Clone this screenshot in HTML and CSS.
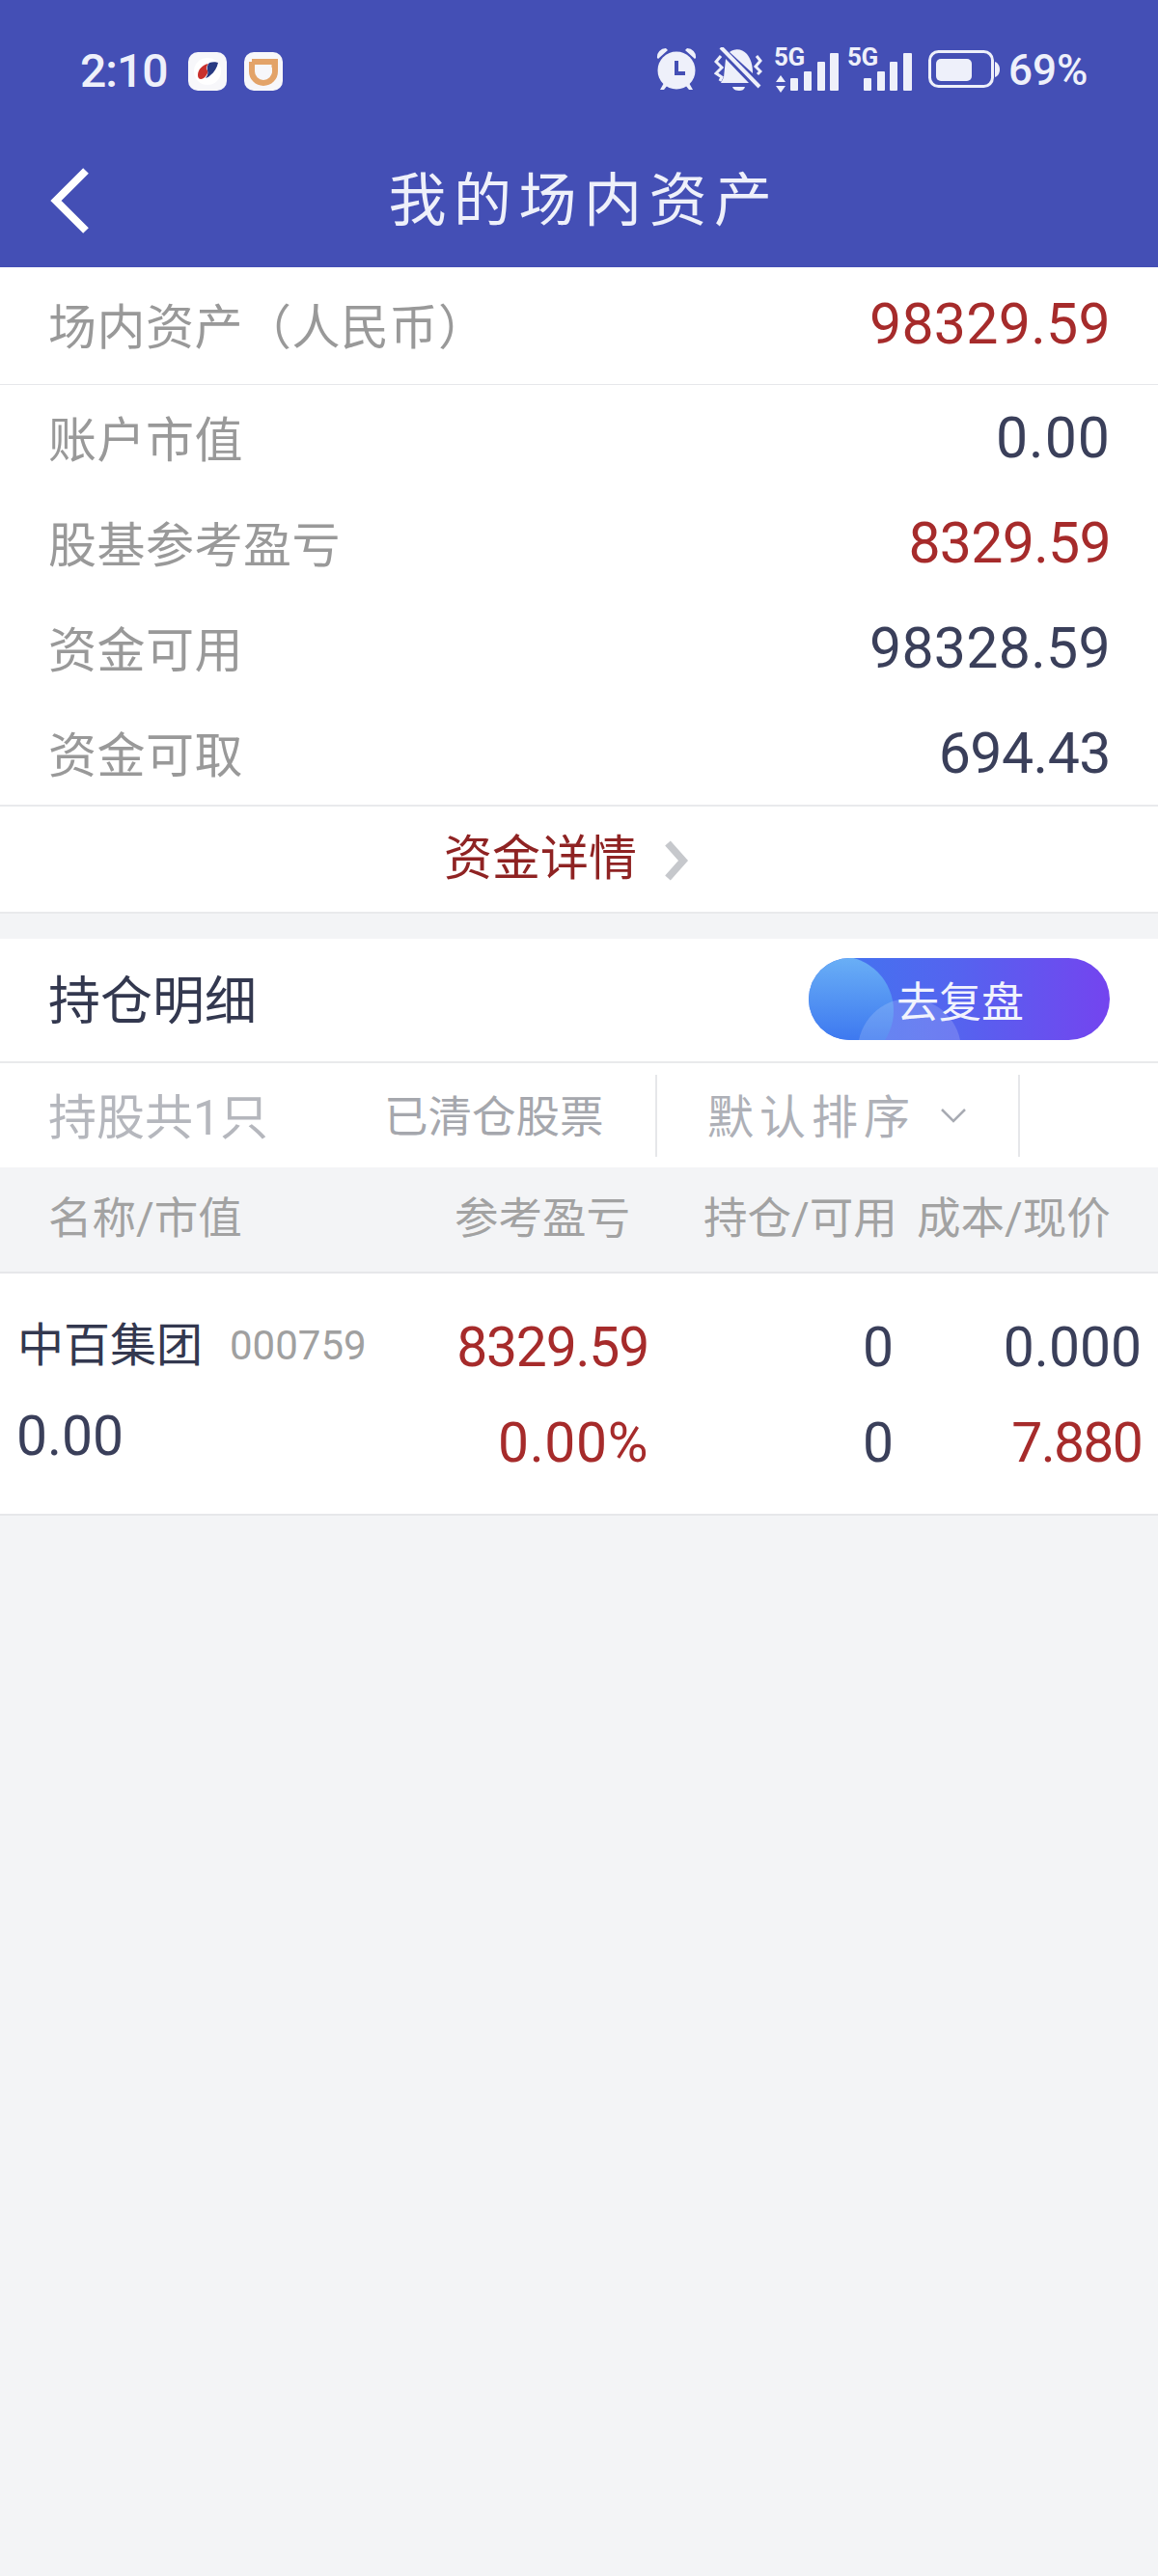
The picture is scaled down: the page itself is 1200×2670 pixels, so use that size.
FILE: index.html
```html
<!DOCTYPE html>
<html lang="zh">
<head>
<meta charset="utf-8">
<title>我的场内资产</title>
<link rel="stylesheet" href="styles.css">
</head>
<body>
<div class="page">
  <header class="header">
    <div class="status">
      <span class="time">2:10</span>
      <span class="app app-first">
        <svg width="40" height="40" viewBox="0 0 40 40"><rect width="40" height="40" rx="10" fill="#f7f7fa"/><circle cx="20" cy="20" r="14" fill="#fff"/><path d="M10 24c0-6 5-11 11-12-2 3-3 5-1 7 1 2-1 6-4 8-3 2-6 1-6-3z" fill="#c9302c"/><path d="M22 11c3-1 7-1 9 0-1 5-4 10-8 13-2 2-3 2-5 3 2-3 3-5 2-8-1-3 0-6 2-8z" fill="#283a82"/></svg>
      </span>
      <span class="app">
        <svg width="40" height="40" viewBox="0 0 40 40"><rect width="40" height="40" rx="10" fill="#f7f7fa"/><path d="M8 10h24v3h-3.500M8 10v10a12 12 0 0 0 24 0v-4" fill="none" stroke="#e3a368" stroke-width="6"/><path d="M14 14h11v4h4v3a9 9 0 0 1-15 0z" fill="#f7f7fa"/></svg>
      </span>
      <span class="status-fill"></span>
      <svg class="ic-alarm" width="42" height="46" viewBox="0 0 42 46"><circle cx="21" cy="25" r="19.500" fill="#eef0fa"/><path d="M1 12a9 9 0 0 1 9-10l2 2-10 9zM41 12a9 9 0 0 0-9-10l-2 2 10 9z" fill="#eef0fa"/><path d="M8 38l-4 7h4l4-5zM34 38l4 7h-4l-4-5z" fill="#eef0fa"/><path d="M19 15h4v11h7v4H19z" fill="#444fb5"/></svg>
      <svg class="ic-bell" width="50" height="46" viewBox="0 0 50 46"><path d="M16 5c5-4 13-4 18 2 4 5 6 11 6 20z" fill="#eef0fa"/><path d="M12 12l24 25H7l3-6z" fill="#eef0fa"/><path d="M19 41h13c-1 3-3 4-6 4s-6-1-7-4z" fill="#eef0fa"/><path d="M7 0l40 41" stroke="#eef0fa" stroke-width="4" fill="none"/><path d="M7 9L2 15l6 6-6 6 6 4-2 4M44 9l4 5-5 6 5 5-3 3" stroke="#eef0fa" stroke-width="3" fill="none"/></svg>
      <span class="signal signal-first">
        <span class="five-g">5G</span>
        <svg class="arrows" width="12" height="18" viewBox="0 0 12 18"><path d="M6 0l5 7H1zM1 11h10l-5 7z" fill="#eef0fa"/></svg>
        <svg class="bars" width="50" height="40" viewBox="0 0 50 40"><rect x="0" y="26" width="8" height="13" rx="1" fill="#eef0fa"/><rect x="14" y="19" width="8" height="20" rx="1" fill="#eef0fa"/><rect x="28" y="9" width="8" height="30" rx="1" fill="#eef0fa"/><rect x="41" y="0" width="9" height="39" rx="1" fill="#eef0fa"/></svg>
      </span>
      <span class="signal signal-second">
        <span class="five-g">5G</span>
        <svg class="bars" width="50" height="40" viewBox="0 0 50 40"><rect x="0" y="26" width="8" height="13" rx="1" fill="#eef0fa"/><rect x="14" y="19" width="8" height="20" rx="1" fill="#eef0fa"/><rect x="27" y="9" width="8" height="30" rx="1" fill="#eef0fa"/><rect x="41" y="0" width="9" height="39" rx="1" fill="#eef0fa"/></svg>
      </span>
      <svg class="ic-batt" width="74" height="40" viewBox="0 0 74 40"><rect x="1.500" y="1.500" width="65" height="36" rx="9" fill="none" stroke="#eef0fa" stroke-width="3"/><rect x="8" y="9" width="37" height="23" rx="5" fill="#eef0fa"/><path d="M69 12c3 1 5 4 5 8s-2 7-5 8z" fill="#eef0fa"/></svg>
      <span class="pct">69%</span>
    </div>
    <div class="nav">
      <svg class="back" width="42" height="70" viewBox="0 0 42 70"><path d="M37 4L6 35l31 31" fill="none" stroke="#fff" stroke-width="8"/></svg>
      <h1 class="title">我的场内资产</h1>
    </div>
  </header>

  <section class="summary">
    <div class="total">
      <span class="label">场内资产（人民币）</span>
      <span class="val red sp-total">98329.59</span>
    </div>
    <div class="stats">
      <div class="stat"><span class="label">账户市值</span><span class="val sp-wide">0.00</span></div>
      <div class="stat"><span class="label">股基参考盈亏</span><span class="val red sp-tight">8329.59</span></div>
      <div class="stat"><span class="label">资金可用</span><span class="val sp-total">98328.59</span></div>
      <div class="stat"><span class="label">资金可取</span><span class="val sp-slight">694.43</span></div>
    </div>
    <div class="detail-link">
      <span class="detail-text">资金详情</span>
      <svg class="detail-arrow" width="27" height="42" viewBox="0 0 27 42"><path d="M5 3l16 18L5 39" fill="none" stroke="#c6c8cc" stroke-width="7.500"/></svg>
    </div>
  </section>

  <section class="holdings">
    <div class="hold-head">
      <h2 class="hold-title">持仓明细</h2>
      <div class="review"><i class="bubble bubble-a"></i><i class="bubble bubble-b"></i><span class="review-text">去复盘</span></div>
    </div>
    <div class="filters">
      <span class="count">持股共1只</span>
      <span class="cleared">已清仓股票</span>
      <span class="sort"><span class="sort-text">默认排序</span><svg width="28" height="16" viewBox="0 0 28 16"><path d="M2 2l12 12L26 2" fill="none" stroke="#a8abb3" stroke-width="2.500"/></svg></span>
      <span class="filter-rest"></span>
    </div>
    <div class="thead">
      <span class="th th-name">名称/市值</span>
      <span class="th th-pl">参考盈亏</span>
      <span class="th th-pos">持仓/可用</span>
      <span class="th th-cost">成本/现价</span>
    </div>
    <div class="trow">
      <div class="cell-name">
        <div class="name-line"><span class="name">中百集团</span><span class="code">000759</span></div>
        <div class="mv">0.00</div>
      </div>
      <div class="cell cell-pl"><span class="num red num-tight">8329.59</span><span class="num red num-wide">0.00%</span></div>
      <div class="cell cell-pos"><span class="num">0</span><span class="num">0</span></div>
      <div class="cell cell-cost"><span class="num">0.000</span><span class="num red num-tighter">7.880</span></div>
    </div>
  </section>
</div>
</body>
</html>
```
FILE: styles.css
```css
* { box-sizing: border-box; }
html, body { margin: 0; padding: 0; }
body {
  background: #f3f4f6;
  font-family: Roboto, "Noto Sans CJK SC", sans-serif;
  color: #3a3f5a;
}
.page { width: 1200px; height: 2670px; background: #f3f4f6; overflow: hidden; }

/* header */
.header { height: 277px; background: #444fb5; color: #eef0fa; }
.status { height: 140px; display: flex; align-items: center; padding: 7px 73px 0 83px; }
.time { font-size: 48px; font-weight: 500; letter-spacing: -1px; width: 112px; }
.app { display: block; height: 40px; margin-right: 18px; }
.app svg, .status svg { display: block; }
.status-fill { flex: 1; }
.ic-alarm { margin-right: 18px; margin-top: -6px; }
.ic-bell { margin-right: 12px; margin-top: -4px; }
.signal { position: relative; display: block; height: 46px; margin-top: -2px; }
.signal-first { width: 67px; margin-right: 9px; }
.signal-second { width: 67px; margin-right: 17px; }
.five-g { position: absolute; left: 0; top: -3px; font-size: 26px; font-weight: 700; line-height: 24px; letter-spacing: -0.500px; }
.arrows { position: absolute; left: 1px; top: 28px; }
.bars { position: absolute; right: 0; top: 5px; }
.ic-batt { margin-right: 9px; margin-top: -4px; }
.pct { font-size: 44px; font-weight: 500; width: 82px; white-space: nowrap; margin-top: -2px; }

.nav { height: 137px; position: relative; display: flex; align-items: center; justify-content: center; }
.back { position: absolute; left: 52px; top: 33px; }
.title { margin: 0 0 0 10px; font-size: 60px; font-weight: 400; letter-spacing: 7.500px; line-height: 80px; color: #eef0fa; }

/* summary */
.summary { background: #fff; }
.total {
  height: 122px;
  padding: 0 49px 5px 50px;
  display: flex; justify-content: space-between; align-items: center;
  border-bottom: 1px solid #e6e7ea;
}
.stats { height: 437px; border-bottom: 2px solid #e9eaec; }
.stat { height: 109px; padding: 0 49px 0 50px; display: flex; justify-content: space-between; align-items: center; }
.label { font-size: 50px; letter-spacing: 0.500px; color: #999; }
.stat .label { margin-bottom: 4px; }
.val { font-size: 59px; color: #3a3f5a; }
.val.red { color: #a62b2b; }
.red { color: #a62b2b; }
.sp-total { letter-spacing: 0.300px; }
.sp-wide { letter-spacing: 1px; }
.sp-tight { letter-spacing: -0.700px; }
.sp-slight { letter-spacing: -0.500px; }
.detail-link { height: 111px; display: flex; align-items: center; justify-content: center; border-bottom: 2px solid #e9eaec; padding: 0 26px 12px 0; }
.detail-text { font-size: 50px; color: #8f2323; }
.detail-arrow { margin-left: 27px; margin-top: 14px; }

/* holdings */
.holdings { margin-top: 26px; background: #fff; }
.hold-head { height: 129px; padding: 0 50px 6px; display: flex; justify-content: space-between; align-items: center; border-bottom: 2px solid #e9eaec; }
.hold-title { margin: 0; font-size: 54px; font-weight: 400; color: #33384f; }
.review {
  position: relative; overflow: hidden;
  width: 312px; height: 85px; border-radius: 43px;
  background: linear-gradient(90deg, #3e78f0 0%, #5563ef 50%, #7444ef 100%);
  display: flex; align-items: center; justify-content: center;
  margin-top: 4px;
}
.bubble { position: absolute; border-radius: 50%; display: block; }
.bubble-a { left: -25px; top: -2px; width: 113px; height: 113px; background: linear-gradient(180deg, #6ab0f6, #3f7af0 75%); }
.bubble-b { left: 51px; top: 42px; width: 107px; height: 107px; background: rgba(255,255,255,.16); }
.review-text { position: relative; font-size: 44px; color: #f1f3fd; margin-left: 2px; }

.filters { height: 108px; display: flex; align-items: center; padding-left: 50px; }
.count { font-size: 50px; color: #b5b7bd; width: 348px; margin-bottom: 4px; }
.cleared { font-size: 45.500px; color: #a5a7ad; width: 281px; margin-bottom: 4px; }
.sort { height: 85px; width: 378px; border-left: 2px solid #e6e7ea; border-right: 2px solid #e6e7ea; display: flex; align-items: center; padding-left: 52px; }
.sort-text { font-size: 48px; letter-spacing: 6px; color: #aeb0b7; margin: 0 25px 4px 0; }
.filter-rest { flex: 1; }

.thead { height: 110px; background: #f3f4f6; border-bottom: 2px solid #e6e7ea; display: flex; align-items: center; padding-bottom: 11px; font-size: 45.500px; color: #a2a2a2; }
.th { display: block; white-space: nowrap; }
.th-name { width: 471px; padding-left: 50px; }
.th-pl { width: 258px; }
.th-pos { width: 221px; }

.trow { height: 251px; border-bottom: 2px solid #e6e7ea; display: flex; background: #fff; }
.cell-name { width: 400px; padding: 37px 0 0 18px; }
.name-line { display: flex; align-items: center; height: 66px; }
.name { font-size: 48px; color: #33384f; }
.code { font-size: 42px; color: #a0a0a0; margin-left: 28px; margin-top: 9px; }
.mv { font-size: 57px; margin-top: 36px; line-height: 60px; margin-left: -1px; }
.cell { padding-top: 44px; display: flex; flex-direction: column; align-items: flex-end; }
.num { font-size: 57px; line-height: 66px; margin-bottom: 33px; }
.num-tight { letter-spacing: -1.200px; }
.num-wide { letter-spacing: 0.600px; }
.num-tighter { letter-spacing: -1.700px; }
.cell-pl { width: 272px; }
.cell-pos { width: 254px; }
.cell-cost { width: 257px; }
```
